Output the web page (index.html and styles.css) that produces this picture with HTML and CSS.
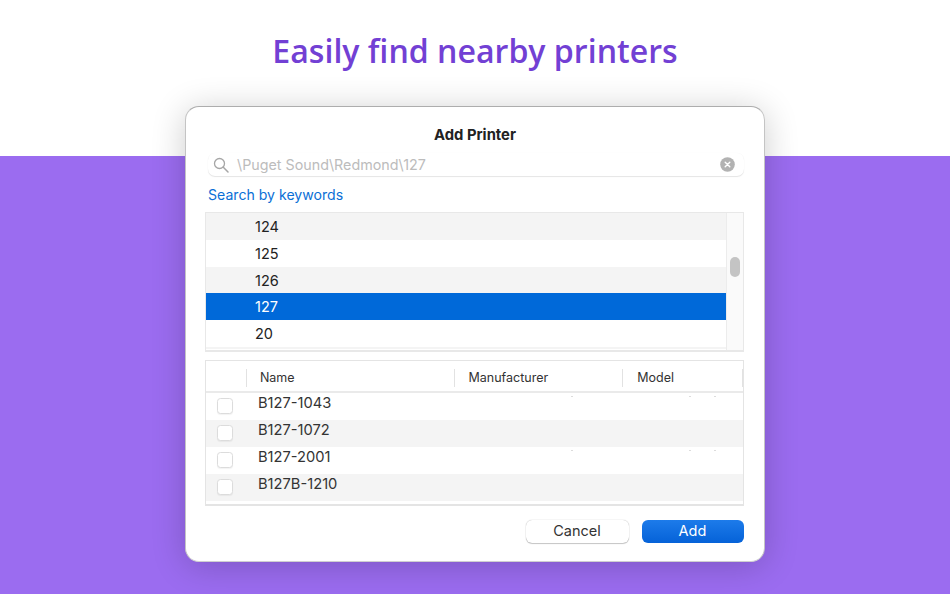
FILE: index.html
```html
<!DOCTYPE html>
<html lang="en">
<head>
<meta charset="utf-8">
<title>Add Printer</title>
<link rel="stylesheet" href="styles.css">
</head>
<body>
<div class="page">
  <header class="hero"><h1>Easily find nearby printers</h1></header>
  <div class="band"></div>
  <section class="dialog">
    <h2>Add Printer</h2>
    <div class="search">
      <svg class="search-icon" width="16" height="16" viewBox="0 0 16 16"><circle cx="6.5" cy="6.5" r="5" fill="none" stroke="#a6a6a6" stroke-width="1.3"/><path d="M10.3 10.3L15 15" stroke="#a6a6a6" stroke-width="1.5" stroke-linecap="round"/></svg>
      <span class="search-text">\Puget Sound\Redmond\127</span>
      <svg class="clear-icon" width="15" height="15" viewBox="0 0 15 15"><circle cx="7.5" cy="7.5" r="7.3" fill="#b2b2b2"/><path d="M5.2 5.2L9.8 9.8M9.8 5.2L5.2 9.8" stroke="#fff" stroke-width="1.4" stroke-linecap="round"/></svg>
    </div>
    <a class="keywords">Search by keywords</a>
    <div class="tree">
      <div class="tree-rows">
        <div class="tree-row alt">124</div>
        <div class="tree-row">125</div>
        <div class="tree-row alt short">126</div>
        <div class="tree-row selected">127</div>
        <div class="tree-row">20</div>
        <div class="tree-row alt stub"></div>
      </div>
      <div class="scroll"><div class="thumb"></div></div>
    </div>
    <div class="table">
      <div class="thead">
        <div class="th th-check"></div>
        <div class="th th-name">Name</div>
        <div class="th th-man">Manufacturer</div>
        <div class="th th-model">Model</div>
      </div>
      <div class="trow"><span class="check"></span><span class="name">B127-1043</span><i class="speck s1"></i><i class="speck s2"></i><i class="speck s3"></i></div>
      <div class="trow alt"><span class="check"></span><span class="name">B127-1072</span></div>
      <div class="trow"><span class="check"></span><span class="name">B127-2001</span><i class="speck s1"></i><i class="speck s2"></i><i class="speck s3"></i></div>
      <div class="trow alt"><span class="check"></span><span class="name">B127B-1210</span></div>
    </div>
    <div class="actions">
      <button class="btn cancel">Cancel</button>
      <button class="btn add">Add</button>
    </div>
  </section>
</div>
</body>
</html>
```
FILE: styles.css
```css
* { box-sizing: border-box; }
html, body { margin: 0; padding: 0; }
body { background: #fff; font-family: Inter, "Liberation Sans", sans-serif; }
.page { position: relative; width: 950px; height: 594px; overflow: hidden; display: flex; flex-direction: column; }
.hero { height: 156px; background: #fff; padding-top: 29px; }
.hero h1 { margin: 0; text-align: center; font: 600 32.1px/44px "Open Sans", sans-serif; color: #7240d4; }
.band { flex: 1; background: #9b6cf0; }
.dialog {
  position: absolute; left: 185px; top: 106px; width: 580px; height: 456px;
  background: #fff; border-radius: 14px; border: 1px solid #c4c4c4; border-top-color: #adadad; border-bottom-color: #d0d0d0;
  box-shadow: 0 4px 34px rgba(0,0,0,.2);
  padding: 19px 20px 0 20px; display: flex; flex-direction: column; color: #262626;
}
.dialog h2 { margin: 0; text-align: center; font-size: 14.8px; line-height: 18px; font-weight: 700; color: #222; }
.search {
  margin: 9px 0 0 2px; height: 23px; width: 536px; display: flex; align-items: center; padding: 0 9px 0 5px;
  border-radius: 7px; background: #fff; box-shadow: 0 1px 1px rgba(0,0,0,.1), 0 0 1px rgba(0,0,0,.05);
}
.search-icon { flex: none; }
.search-text { flex: 1; margin-left: 8px; font-size: 14.3px; color: #bcbcbc; }
.clear-icon { flex: none; }
.keywords { margin: 9px 0 0 2px; font-size: 14.1px; line-height: 20px; color: #0b6fd6; }
.tree {
  margin: 7px 0 0 -1px; height: 140px; width: 539px; display: flex; border: 1px solid #e8e8e8; border-bottom-width: 2px;
}
.tree-rows { flex: 1; }
.tree-row { height: 27px; padding-left: 49px; font-size: 14.5px; line-height: 27px; color: #222; }
.tree-row.alt { background: #f4f4f4; }
.tree-row.short { height: 26px; }
.tree-row.selected { background: #0069d9; color: #fff; }
.tree-row.stub { height: 2px; }
.scroll { width: 17px; background: #fafafa; border-left: 1px solid #ececec; padding: 44px 0 0 3px; }
.thumb { width: 10px; height: 20px; border-radius: 5px; background: #c4c4c4; }
.table { margin: 8px 0 0 -1px; height: 146px; width: 539px; border: 1px solid #e4e4e4; border-bottom-width: 2px; }
.thead { height: 32px; padding-top: 4px; display: flex; align-items: center; border-bottom: 2px solid #eaeaea; font-size: 12.5px; color: #333; }
.th { height: 18px; line-height: 18px; border-right: 1px solid #e2e2e2; }
.th-check { width: 41px; }
.th-name { width: 208px; padding-left: 13px; }
.th-man { width: 169px; padding-left: 14px; }
.th-model { width: 120px; padding-left: 14px; }
.trow { position: relative; height: 27px; display: flex; padding-left: 11px; }
.trow.alt { background: #f4f4f4; }
.check { width: 16px; height: 16px; margin-top: 5px; border: 1px solid #dcdcdc; border-radius: 3.5px; background: #fff; box-shadow: 0 1px 1px rgba(0,0,0,.05); }
.name { margin-left: 25px; font-size: 14.7px; line-height: 20px; color: #333; }
.speck { position: absolute; top: 3px; width: 2px; height: 1px; background: #dcdcdc; }
.s1 { left: 365px; }
.s2 { left: 483px; }
.s3 { left: 508px; }
.actions { margin-top: 14px; display: flex; justify-content: flex-end; gap: 13px; }
.btn { height: 23px; padding: 0 0 2px; border: 0; border-radius: 6px; font: 14.5px/21px Inter, "Liberation Sans", sans-serif; }
.cancel { width: 103px; padding-right: 1px; background: #fff; color: #333; box-shadow: 0 0 1px rgba(0,0,0,.35), 0 1px 1px rgba(0,0,0,.2); }
.add { width: 102px; padding-right: 1px; background: linear-gradient(#1d7bea, #0562d8); color: #fff; }
```
